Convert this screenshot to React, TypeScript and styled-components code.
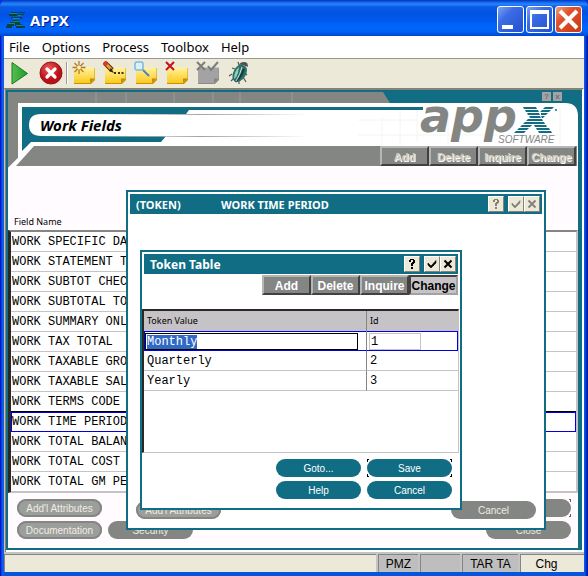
import React from "react";
import styled, { createGlobalStyle, css } from "styled-components";

const teal = "#106d84";
const gray = "#848684";
const silver = "#c6c3c6";
const beige = "#ece9d8";
const ui = '"Liberation Sans", Arial, sans-serif';
const humanist = '"Noto Sans", Tahoma, sans-serif';
const mono = '"Liberation Mono", "Courier New", monospace';

const GlobalStyle = createGlobalStyle`
  *, *::before, *::after { box-sizing: border-box; }
  body { margin: 0; background: #0831d9; font-family: ${ui}; color: #000; }
  button, input { font: inherit; margin: 0; padding: 0; border-radius: 0; }
  h1, h2, p { margin: 0; }
`;

const Window = styled.div`
  display: flex;
  flex-direction: column;
  min-height: 100vh;
  padding: 0 4px 4px;
  background: linear-gradient(90deg, #0019cf 0, #0019cf 1px, #0831d9 1px, #166aee 3px, #0855dd 4px, #0855dd calc(100% - 4px), #0a5be8 calc(100% - 3px), #0831d9 calc(100% - 2px), #00138c 100%);
  border-radius: 6px 6px 0 0;
`;

const TitleBar = styled.header`
  display: flex;
  align-items: center;
  gap: 5px;
  height: 36px;
  margin: 0 -4px;
  padding: 3px 6px 0 6px;
  border-radius: 6px 6px 0 0;
  background: linear-gradient(#0a30c0 0, #0b63e8 2px, #2a86f8 4px, #0a5ae6 7px, #0054e3 14px, #0058ee 20px, #0066fb 27px, #0062f5 32px, #0046c8 36px);
`;

const WindowTitle = styled.h1`
  flex: 1;
  font: bold 15px/20px ${humanist};
  color: #fff;
  text-shadow: 1px 1px #0a1883;
`;

const WindowControls = styled.div`
  display: flex;
  gap: 2px;
`;

const WindowControl = styled.button<{ $close?: boolean }>`
  width: 27px;
  height: 27px;
  border: 1px solid #fff;
  border-radius: 3px;
  background: ${(p) =>
    p.$close
      ? "linear-gradient(135deg, #f0a084, #e0522c 35%, #c63a14)"
      : "linear-gradient(135deg, #7da2f4, #3c6ce4 35%, #2350cf)"};
  svg { display: block; width: 25px; height: 25px; }
`;

const MenuBar = styled.nav`
  display: flex;
  gap: 12px;
  height: 23px;
  padding: 0 5px;
  background: #fff;
  border-bottom: 1px solid #9c9a8c;
`;

const MenuItem = styled.button`
  border: 0;
  background: none;
  font: 13px/22px ${humanist};
`;

const Toolbar = styled.div`
  display: flex;
  align-items: flex-start;
  height: 29px;
  background: ${beige};
`;

const ToolButton = styled.button`
  width: 31px;
  height: 27px;
  border: 0;
  background: none;
  svg { display: block; width: 24px; height: 24px; margin: 0 auto; }
`;

const ToolSeparator = styled.span`
  width: 2px;
  height: 22px;
  margin-top: 3px;
  border-left: 1px solid #9c9a8c;
  border-right: 1px solid #fff;
`;

const Workspace = styled.main`
  flex: 1;
  display: flex;
  padding-left: 1px;
  padding-bottom: 2px;
  border-top: 2px solid #848278;
  border-left: 1px solid #c6c3b5;
  border-right: 2px solid #fff;
  background: linear-gradient(90deg, #848278 1px, #fff 1px);
`;

const Page = styled.section`
  position: relative;
  flex: 1;
  display: flex;
  flex-direction: column;
  border: 2px solid ${teal};
  border-right-width: 4px;
  background: #fffbff;
`;

const Banner = styled.div`
  position: relative;
  height: 76px;
  display: flex;
  flex-direction: column;
  justify-content: space-between;
  padding-bottom: 2px;
`;

const BannerArt = styled.svg`
  position: absolute;
  inset: 0;
  width: 100%;
  height: 100%;
`;

const BannerTop = styled.div`
  position: relative;
  display: flex;
  justify-content: space-between;
  align-items: flex-start;
`;

const PageTitle = styled.h2`
  padding: 22px 0 0 32px;
  font: italic bold 15px/22px ${humanist};
`;

const BannerRight = styled.div`
  display: flex;
  flex-direction: column;
  align-items: flex-end;
  padding-right: 16px;
`;

const MiniButtons = styled.div`
  display: flex;
  gap: 2px;
  height: 10px;
`;

const MiniButton = styled.button`
  width: 9px;
  height: 9px;
  border: 0;
  background: #a5a2a5;
  color: #736f73;
  font: bold 8px/9px ${ui};
`;

const Logo = styled.svg`
  width: 146px;
  height: 44px;
  overflow: visible;
`;

const ModeBar = styled.div<{ $page?: boolean }>`
  position: relative;
  display: flex;
  justify-content: flex-end;
  padding-right: ${(p) => (p.$page ? "2px" : "0")};
  margin-top: ${(p) => (p.$page ? "0" : "1px")};
`;

const etched = css`
  color: #cecbbd;
  text-shadow: 1px 1px #fff;
`;

const ModeButton = styled.button<{ $active?: boolean }>`
  width: 49px;
  height: 20px;
  border: 2px solid;
  border-color: ${(p) => (p.$active ? "#424142 #a5a2a5 #a5a2a5 #424142" : "#b5b6b5 #424142 #424142 #b5b6b5")};
  background: ${(p) => (p.$active ? silver : gray)};
  color: ${(p) => (p.$active ? "#000" : "#fff")};
  font: bold 12px/18px ${ui};
  white-space: nowrap;
  display: flex;
  justify-content: center;
  &:disabled { ${etched} font-size: 11px; }
`;

const FieldTable = styled.table`
  width: 100%;
  margin-top: 47px;
  border-spacing: 0;
  border: solid;
  border-width: 2px 2px 1px 3px;
  border-color: ${gray} ${silver} ${silver} #292829;
  background: #fff;
  caption {
    padding: 0 6px 2px;
    text-align: left;
    font: 9px/13px ${humanist};
  }
`;

const FieldCell = styled.td<{ $current?: boolean; $above?: boolean }>`
  height: 20px;
  padding: 2px 1px 0;
  border-bottom: 1px solid ${(p) => (p.$above ? "#000" : silver)};
  font: 12px/17px ${mono};
  white-space: nowrap;
  ${(p) => p.$current && css`border-bottom-color: #0000e0; box-shadow: inset 1px 1px #0000e0, inset -1px 0 #0000e0;`}
`;

const PageActions = styled.div`
  display: grid;
  grid-template-columns: 85px 85px 1fr 85px;
  gap: 4px 6px;
  padding: 6px 7px 8px 9px;
`;

const Pill = styled.button<{ $soft?: boolean; $end?: boolean }>`
  width: 85px;
  height: 18px;
  border: 0;
  border-radius: 9px;
  background: ${teal};
  color: #fff;
  font: 10px/17px ${ui};
  text-align: center;
  ${(p) => p.$end && css`grid-column: 4;`}
  &:disabled {
    background: ${(p) => (p.$soft ? "#9c9e9c" : gray)};
    ${(p) => p.$soft && css`box-shadow: inset 0 0 0 2px #848684;`}
    color: #efece2;
  }
`;

const FocusFrame = styled.span<{ $muted?: boolean }>`
  display: block;
  width: 85px;
  height: 18px;
  grid-column: ${(p) => (p.$muted ? "4" : "auto")};
  background-image: ${(p) => Array(8).fill(p.$muted ? "linear-gradient(#636163, #636163)" : "linear-gradient(#000, #000)").join(", ")};
  background-repeat: no-repeat;
  background-size: 2px 1px, 1px 3px, 2px 1px, 1px 3px, 2px 1px, 1px 3px, 2px 1px, 1px 3px;
  background-position: 0 0, 0 0, 100% 0, 100% 0, 0 100%, 0 100%, 100% 100%, 100% 100%;
  ${Pill} { display: block; }
`;

const Dialog = styled.section<{ $inner?: boolean }>`
  position: absolute;
  top: ${(p) => (p.$inner ? "158px" : "98px")};
  left: ${(p) => (p.$inner ? "132px" : "118px")};
  right: ${(p) => (p.$inner ? "116px" : "32px")};
  border: 2px solid ${teal};
  padding: 2px;
  background: #fff;
`;

const DialogTitle = styled.div`
  display: flex;
  align-items: center;
  height: 20px;
  padding: 0 2px 0 6px;
  background: ${teal};
  color: #fff;
`;

const DialogHeading = styled.h2<{ $size: number; $code?: boolean }>`
  flex: ${(p) => (p.$code ? "0 0 85px" : "1")};
  padding-top: 2px;
  font: bold ${(p) => p.$size}px/20px ${humanist};
  white-space: nowrap;
`;

const IconGroup = styled.div`
  display: flex;
  margin-left: 4px;
`;

const IconButton = styled.button`
  width: 16px;
  height: 16px;
  border: 1px solid;
  border-color: #fff #848278 #848278 #fff;
  background: ${beige};
  color: #000;
  &:disabled { color: #848278; }
  svg { display: block; width: 14px; height: 14px; }
`;

const TokenBody = styled.div`
  min-height: 144px;
  margin: 14px -1px 0 -2px;
  border: solid;
  border-width: 2px 1px 1px 2px;
  border-color: #292829 ${silver} ${silver} #292829;
`;

const TokenTable = styled.table`
  width: 100%;
  border-spacing: 0;
  table-layout: fixed;
`;

const TokenHead = styled.th<{ $id?: boolean }>`
  width: ${(p) => (p.$id ? "29%" : "auto")};
  height: 20px;
  padding: 0 4px 0 3px;
  border-right: ${(p) => (p.$id ? "0" : `1px solid ${gray}`)};
  background: ${silver};
  text-align: left;
  font: 9px/18px ${humanist};
`;

const TokenCell = styled.td<{ $first?: boolean; $current?: boolean }>`
  height: 20px;
  padding: ${(p) => (p.$current ? "1px 8px 0 1px" : "2px 3px 0")};
  border-bottom: 1px solid ${(p) => (p.$current ? "#0000e0" : silver)};
  border-right: ${(p) => (p.$first ? `1px solid ${gray}` : "0")};
  font: 12px/17px ${mono};
  ${(p) => p.$current && css`box-shadow: inset 0 1px #0000e0${p.$first ? ", inset 1px 0 #0000e0" : ", inset -1px 0 #0000e0"};`}
`;

const CellInput = styled.input<{ $active?: boolean }>`
  display: block;
  width: ${(p) => (p.$active ? "100%" : "52px")};
  height: 17px;
  margin-left: ${(p) => (p.$active ? "0" : "1px")};
  padding: 1px 1px 0;
  border: 1px solid ${(p) => (p.$active ? "#000" : silver)};
  background: #fff;
  font: 12px/14px ${mono};
  outline: 0;
  &::selection { background: #316ac5; color: #fff; }
`;

const TokenActions = styled.div`
  display: grid;
  grid-template-columns: 85px 85px;
  justify-content: end;
  gap: 4px 6px;
  padding: 6px 6px 7px 0;
`;

const RecordBody = styled.div`
  display: flex;
  align-items: flex-end;
  justify-content: space-between;
  min-height: 312px;
  padding: 0 6px 7px;
`;

const StatusBar = styled.footer`
  display: flex;
  gap: 2px;
  height: 20px;
  border-top: 2px solid ${silver};
  background: ${silver};
`;

const StatusCell = styled.div<{ $width?: number; $light?: boolean }>`
  flex: ${(p) => (p.$width ? `0 0 ${p.$width}px` : "1")};
  border-top: 1px solid ${gray};
  border-left: 1px solid ${gray};
  background: ${(p) => (p.$light ? beige : "#bdbebd")};
  font: 12px/19px ${ui};
  text-align: center;
  padding-right: ${(p) => (p.$light ? "12px" : "0")};
`;

const XMark = ({ fill }: { fill: string }) => (
  <g fill={fill}>
    <path d="M5 0h13l1 2H6zM7 3h13l1 2H8zM9 6h12l1 2H10zM11 9h11l1 2H12zM10 12h14l1 2H8zM7 15h19l1 2H5zM4 18h10l-2 2H2zM16 18h12l1 2H17zM1 21h10l-2 2H-1zM18 21h13l1 2H19zM-2 24h10l-2 2H-4zM20 24h13l1 2H21z" />
    <path d="M27 0h9l-2 2h-9zM24 3h9l-2 2h-9zM23 6h7l-2 2h-5zM23 9h4l-2 2h-1z" />
    <circle cx="38" cy="3" r="1" />
  </g>
);

const AppIcon = () => (
  <svg width="19" height="16" viewBox="0 0 19 16" aria-hidden="true">
    <path fill="#0b3f46" d="M5 0h7v1H5zM13 0h6v1h-6zM3 2h8v2H3zM12 2h6v1h-6zM5 5h11v2H5zM6 8h7v2H6zM4 10h10v2H4zM1 12h7v2H1zM9 12h7v2H9zM0 14h6v2H0zM10 14h9v2h-9z" />
    <path fill="#108a84" d="M4 1h7v1H4zM12 3h3v1h-3zM6 6h8v1H6zM6 9h7v1H6zM3 11h6v1H3zM10 13h6v1h-6z" />
  </svg>
);

const Note = ({ muted }: { muted?: boolean }) => (
  <>
    <path d="M3 7h20v12l-4 4H2z" fill={muted ? "#8a8a8a" : "#c89200"} />
    <path d="M2 6.500h20.500v11L18 22H2z" fill={muted ? "#a3a3a3" : "url(#note)"} />
    <path d="M18 22v-4.500h4.500z" fill={muted ? "#858585" : "#c98a00"} />
  </>
);

const Play = () => (
  <svg viewBox="0 0 24 24">
    <path d="M4 1.500L19.500 12.500 4 23z" fill="url(#play)" stroke="#1d7a1d" strokeLinejoin="round" />
  </svg>
);

const Stop = () => (
  <svg viewBox="0 0 24 24">
    <circle cx="12" cy="12" r="11" fill="url(#stop)" stroke="#8b1a1a" />
    <path d="M8 8l8 8M16 8l-8 8" stroke="#fff" strokeWidth="3.200" strokeLinecap="round" />
  </svg>
);

const NewNote = () => (
  <svg viewBox="0 0 24 24">
    <Note />
    <path d="M7 0v13M.500 6.500h13M2.500 2l9 9M11.500 2l-9 9" stroke="#b07a2a" strokeWidth="1.300" />
    <circle cx="7" cy="6.500" r="2" fill="#fff0b0" />
  </svg>
);

const EditNote = () => (
  <svg viewBox="0 0 24 24">
    <Note />
    <path d="M2 2l7 7" stroke="#5a2a10" strokeWidth="5" />
    <path d="M2.500 2.500l6 6" stroke="#f09a30" strokeWidth="3" />
    <path d="M1 1l3 3" stroke="#c8402a" strokeWidth="4.500" />
    <path d="M8 7l3 5-5-2z" fill="#222" />
    <path d="M11 11h2v2h-2zM15 11h2v2h-2zM18.500 11h2v2h-2z" fill="#40300a" />
  </svg>
);

const FindNote = () => (
  <svg viewBox="0 0 24 24">
    <Note />
    <rect x="1" y="1" width="8" height="8" rx="2" fill="#d8f2fc" stroke="#7fb8e0" strokeWidth="1.500" />
    <path d="M9 9l6 6" stroke="#4a82c0" strokeWidth="2" />
  </svg>
);

const DeleteNote = () => (
  <svg viewBox="0 0 24 24">
    <Note />
    <path d="M1 1l8 8M9 1l-8 8" stroke="#c8101a" strokeWidth="2" />
  </svg>
);

const ValidateNote = () => (
  <svg viewBox="0 0 24 24">
    <Note muted />
    <path d="M1 1l8 8M9 1l-8 8M12 5l3 4 7-8" stroke="#7c7c7c" strokeWidth="2" fill="none" />
  </svg>
);

const Bug = () => (
  <svg viewBox="0 0 24 24">
    <path d="M8 8L5 7M5 13l-3 2M7 17l-3 3M12 20v3M18 12l2 2M16 16l3 5M18 5l2-3M12 4l-1-3" stroke="#555" strokeWidth="1.200" fill="none" />
    <path d="M12 4q6-1 8 4q0 6-4 10q-4 4-8 3q-4-4-2-9q2-6 6-8z" fill="#2c7068" />
    <path d="M12 6q-5 4-5 12q3-2 4-6z" fill="#8fcdb8" />
    <path d="M17 8q-3 9-8 12" stroke="#163c40" strokeWidth="2" fill="none" />
    <path d="M15 6q-2 8-6 14" stroke="#cfe8dc" strokeWidth="1" fill="none" />
    <path d="M12 4q1-3 5-3t4 5q-5-3-9-2z" fill="#4a5254" />
  </svg>
);

const tools = [
  ["New", NewNote],
  ["Edit", EditNote],
  ["Find", FindNote],
  ["Remove", DeleteNote],
  ["Validate", ValidateNote],
  ["Debug", Bug],
] as const;

const Help = () => (
  <svg viewBox="0 0 14 14">
    <path d="M4 5V3h1V2h4v1h1v3H9v1H8v2H6V6h1V5h1V3H6v2zM6 10h2v2H6z" fill="currentColor" />
  </svg>
);
const Check = () => (
  <svg viewBox="0 0 14 14">
    <path d="M3 6l3 3 5-5.500v2.500l-5 5-3-3z" fill="currentColor" stroke="currentColor" strokeWidth=".6" />
  </svg>
);
const Cross = () => (
  <svg viewBox="0 0 14 14">
    <path d="M3.500 3.500l7 7M10.500 3.500l-7 7" stroke="currentColor" strokeWidth="2" />
  </svg>
);

const DialogIcons = ({ disabled }: { disabled?: boolean }) => (
  <>
    <IconGroup>
      <IconButton aria-label="Help" disabled={disabled}><Help /></IconButton>
    </IconGroup>
    <IconGroup>
      <IconButton aria-label="Accept" disabled={disabled}><Check /></IconButton>
      <IconButton aria-label="Close" disabled={disabled}><Cross /></IconButton>
    </IconGroup>
  </>
);

const modes = ["Add", "Delete", "Inquire", "Change"];

const fields = [
  "WORK SPECIFIC DA", "WORK STATEMENT T", "WORK SUBTOT CHEC", "WORK SUBTOTAL TO",
  "WORK SUMMARY ONL", "WORK TAX TOTAL", "WORK TAXABLE GRO", "WORK TAXABLE SAL",
  "WORK TERMS CODE", "WORK TIME PERIOD", "WORK TOTAL BALAN", "WORK TOTAL COST",
  "WORK TOTAL GM PE",
];
const currentField = 9;

const BannerDrawing = () => (
  <BannerArt viewBox="0 0 570 76" preserveAspectRatio="none" aria-hidden="true">
    <path d="M0 0H570V76H0z" fill="#fffbff" />
    <path d="M0 0H376L383 11H10V66L0 76z" fill={gray} />
    <path d="M375 0H570V76H570V24Q570 11 557 11H382z" fill={teal} />
    <path d="M10 11H553Q569 11 569 27V76H0L10 66z" fill="#fff" />
    <path d="M88 0V11M118 0V11M166 0V11M205 0V11M232 0V11M284 0V11" stroke="#9a9c9a" />
    <path d="M374 25V54M392 15V54M409 18V50M350 43H550M350 28H410M440 15V54M552 15V54" stroke="#f3f4f5" />
    <path d="M14 15H415V18H181L178 22H33Q21 22 21 33Q21 44 33 44H158L153 50H23L14 59z" fill={teal} />
    <path d="M30 22.500H300M30 44.500H300" stroke="url(#fade)" />
    <path d="M26 54H569V74H8z" fill={gray} />
  </BannerArt>
);

export default function App() {
  const active = React.useRef<HTMLInputElement>(null);
  React.useEffect(() => {
    active.current?.focus();
    active.current?.select();
  }, []);

  return (
    <Window>
      <GlobalStyle />
      <svg width="0" height="0" style={{ position: "absolute" }} aria-hidden="true">
        <defs>
          <linearGradient id="note" x2="0" y2="1"><stop stopColor="#fff3a0" /><stop offset="1" stopColor="#fbc91c" /></linearGradient>
          <linearGradient id="play"><stop stopColor="#54c054" /><stop offset="1" stopColor="#1f9a28" /></linearGradient>
          <radialGradient id="stop" cx=".4" cy=".3"><stop stopColor="#f05858" /><stop offset="1" stopColor="#bc1018" /></radialGradient>
          <linearGradient id="fade" gradientUnits="userSpaceOnUse" x1="30" x2="300"><stop stopColor="#fff" stopOpacity="0" /><stop offset=".6" stopColor="#a5a2a5" /><stop offset="1" stopColor="#fff" /></linearGradient>
        </defs>
      </svg>

      <TitleBar>
        <AppIcon />
        <WindowTitle>APPX</WindowTitle>
        <WindowControls>
          <WindowControl aria-label="Minimize"><svg viewBox="0 0 25 25"><path d="M4 18h11v4H4z" fill="#fff" /></svg></WindowControl>
          <WindowControl aria-label="Maximize"><svg viewBox="0 0 25 25"><path fillRule="evenodd" d="M3 3h19v19H3zM5 7v13h15V7z" fill="#fff" /></svg></WindowControl>
          <WindowControl $close aria-label="Close"><svg viewBox="0 0 25 25"><path d="M4 4l17 17M21 4L4 21" stroke="#fff" strokeWidth="4" /></svg></WindowControl>
        </WindowControls>
      </TitleBar>

      <MenuBar>
        {["File", "Options", "Process", "Toolbox", "Help"].map((m) => <MenuItem key={m}>{m}</MenuItem>)}
      </MenuBar>

      <Toolbar>
        <ToolButton aria-label="Run"><Play /></ToolButton>
        <ToolButton aria-label="Stop"><Stop /></ToolButton>
        <ToolSeparator />
        {tools.map(([name, Icon]) => (
          <ToolButton key={name} aria-label={name}><Icon /></ToolButton>
        ))}
      </Toolbar>

      <Workspace>
        <Page>
          <Banner>
            <BannerDrawing />
            <BannerTop>
              <PageTitle>Work Fields</PageTitle>
              <BannerRight>
                <MiniButtons>
                  <MiniButton disabled>?</MiniButton>
                  <MiniButton disabled aria-label="Close">x</MiniButton>
                </MiniButtons>
                <Logo viewBox="0 0 146 44" role="img" aria-label="appx software">
                  <text x="4" y="30" fontFamily="DejaVu Sans" fontSize="46" fontWeight="bold" fontStyle="italic" fill={gray}>app</text>
                  <g transform="translate(102 5)"><XMark fill={teal} /></g>
                  <text x="82" y="41" fontFamily="Liberation Sans" fontSize="10" fontStyle="italic" fill={gray}>SOFTWARE</text>
                </Logo>
              </BannerRight>
            </BannerTop>
            <ModeBar $page>
              {modes.map((m) => <ModeButton key={m} disabled>{m}</ModeButton>)}
            </ModeBar>
          </Banner>

          <FieldTable>
            <caption>Field Name</caption>
            <tbody>
              {fields.map((f, i) => (
                <tr key={f}>
                  <FieldCell $current={i === currentField} $above={i === currentField - 1}>{f}</FieldCell>
                </tr>
              ))}
            </tbody>
          </FieldTable>

          <PageActions>
            <Pill disabled $soft>Add'l Attributes</Pill>
            <FocusFrame $muted><Pill disabled aria-label="Save" /></FocusFrame>
            <Pill disabled $soft>Documentation</Pill>
            <Pill disabled>Security</Pill>
            <Pill disabled $end>Close</Pill>
          </PageActions>

          <Dialog role="dialog" aria-label="Work time period">
            <DialogTitle>
              <DialogHeading $size={11} $code>(TOKEN)</DialogHeading>
              <DialogHeading $size={11}>WORK TIME PERIOD</DialogHeading>
              <DialogIcons disabled />
            </DialogTitle>
            <RecordBody>
              <Pill disabled $soft>Add'l Attributes</Pill>
              <Pill disabled>Cancel</Pill>
            </RecordBody>
          </Dialog>

          <Dialog $inner role="dialog" aria-label="Token table">
            <DialogTitle>
              <DialogHeading $size={12}>Token Table</DialogHeading>
              <DialogIcons />
            </DialogTitle>
            <ModeBar>
              {modes.map((m) => <ModeButton key={m} $active={m === "Change"}>{m}</ModeButton>)}
            </ModeBar>
            <TokenBody>
              <TokenTable>
                <thead>
                  <tr><TokenHead scope="col">Token Value</TokenHead><TokenHead scope="col" $id>Id</TokenHead></tr>
                </thead>
                <tbody>
                  <tr>
                    <TokenCell $first $current><CellInput ref={active} $active aria-label="Token Value" defaultValue="Monthly" /></TokenCell>
                    <TokenCell $current><CellInput aria-label="Id" defaultValue="1" /></TokenCell>
                  </tr>
                  <tr><TokenCell $first>Quarterly</TokenCell><TokenCell>2</TokenCell></tr>
                  <tr><TokenCell $first>Yearly</TokenCell><TokenCell>3</TokenCell></tr>
                </tbody>
              </TokenTable>
            </TokenBody>
            <TokenActions>
              <Pill>Goto...</Pill>
              <FocusFrame><Pill>Save</Pill></FocusFrame>
              <Pill>Help</Pill>
              <Pill>Cancel</Pill>
            </TokenActions>
          </Dialog>
        </Page>
      </Workspace>

      <StatusBar>
        <StatusCell $light />
        <StatusCell $width={40}>PMZ</StatusCell>
        <StatusCell $width={40} />
        <StatusCell $width={56}>TAR TA</StatusCell>
        <StatusCell $width={64} $light>Chg</StatusCell>
      </StatusBar>
    </Window>
  );
}
